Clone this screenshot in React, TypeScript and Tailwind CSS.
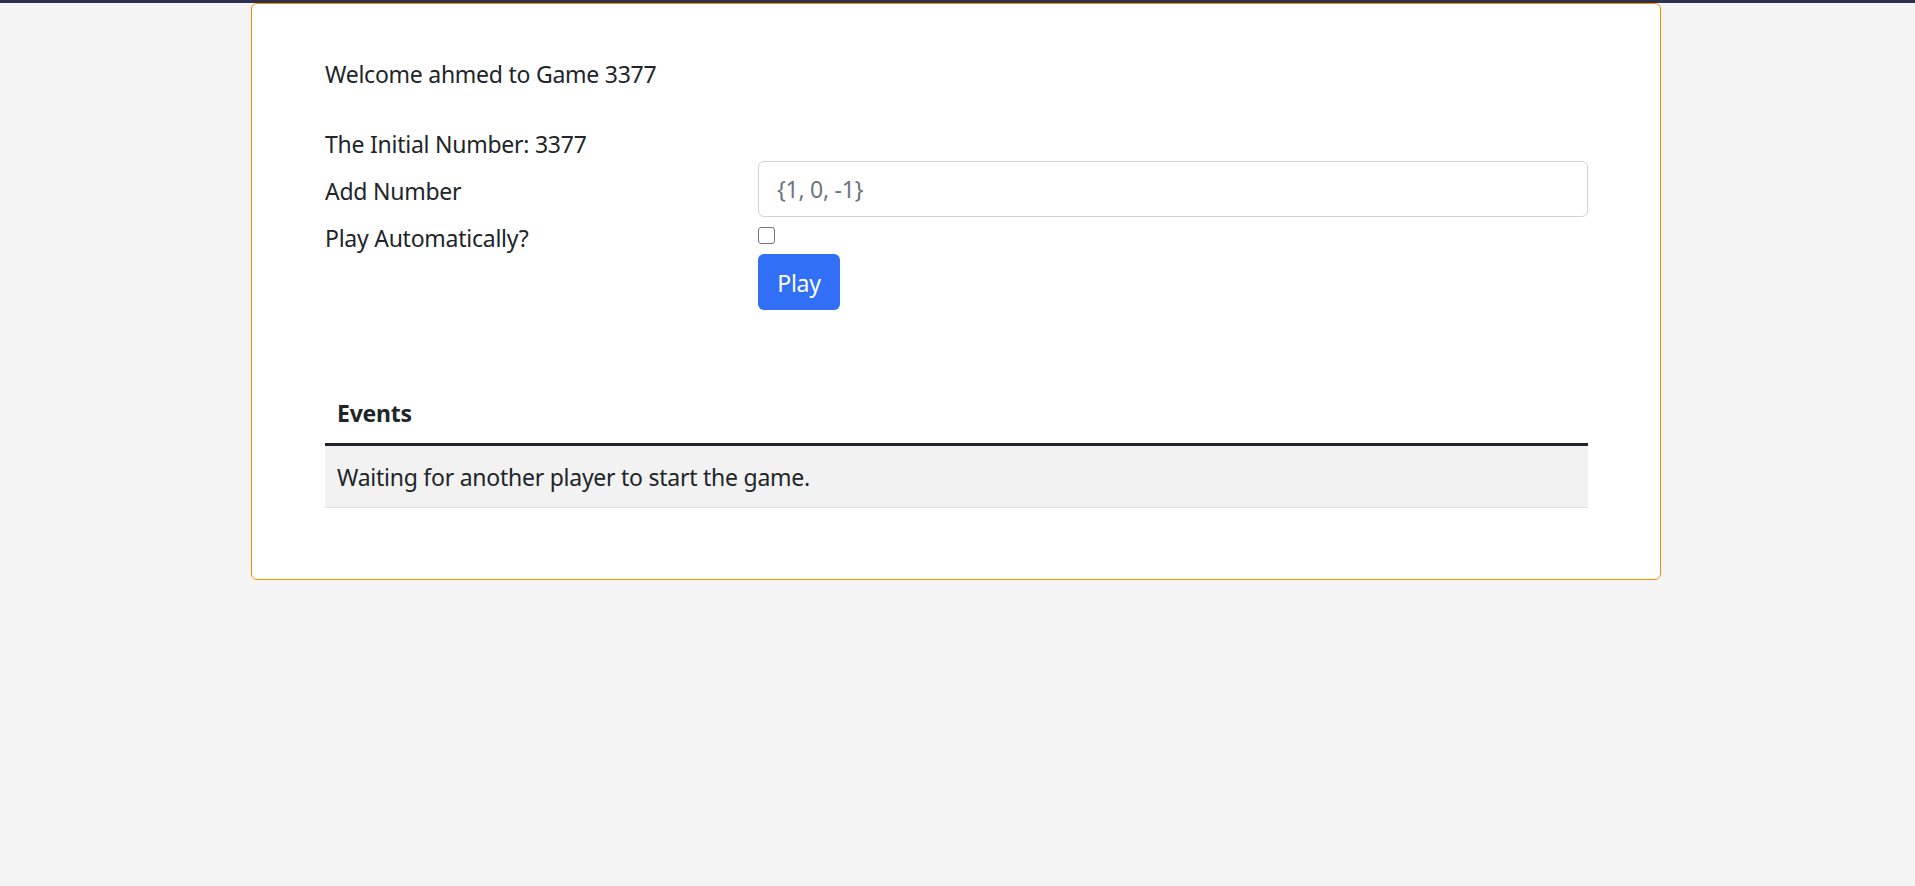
import { useState } from 'react';

const font = { fontFamily: '"Noto Sans", "Open Sans", Arial, sans-serif' };

export default function App() {
    const [auto, setAuto] = useState(false);
    const [value, setValue] = useState('');

    return (
        <div className="min-h-[886px] bg-[#f4f4f4] text-[#212529]" style={font}>
            <div className="h-[3px] bg-[#2c3250]" />

            <div className="ml-[251px] w-[1410px] rounded-[6px] border border-[#ff8c00] bg-white pb-[71px] pl-[73px] pr-[72px] pt-[51px] text-[23px] leading-[36px] tracking-[-0.25px]">
                <p className="pt-[1px]">Welcome ahmed to Game 3377</p>

                <p className="mt-[33px] pt-[1px]">The Initial Number: 3377</p>

                <div className="grid grid-cols-[433px_1fr]">
                    <label className="pt-[11px]">Add Number</label>
                    <input
                        value={value}
                        onChange={e => setValue(e.target.value)}
                        placeholder="{1, 0, -1}"
                        className="-mt-[1px] h-[56px] w-full rounded-[6px] border border-[#ced4da] px-[18px] text-[23px] tracking-[-0.25px] outline-none placeholder:text-[#6c757d]"
                    />

                    <label className="pt-[3px]">Play Automatically?</label>
                    <div className="flex flex-col items-start">
                        <input
                            type="checkbox"
                            checked={auto}
                            onChange={e => setAuto(e.target.checked)}
                            className="mt-[10px] h-[17px] w-[17px] appearance-none rounded-[3px] border border-[#767676] bg-white checked:bg-[#0075ff]"
                        />
                        <button
                            type="button"
                            className="mt-[10px] flex h-[56px] w-[82px] items-center justify-center rounded-[6px] bg-[#316ff6] pt-[1px] text-[23px] text-white"
                        >
                            Play
                        </button>
                    </div>
                </div>

                <table className="mt-[72px] w-full border-collapse text-left">
                    <thead>
                        <tr>
                            <th className="border-b-[3px] border-[#212529] px-[12px] pb-[12px] pt-[13px] font-bold">Events</th>
                        </tr>
                    </thead>
                    <tbody>
                        <tr className="bg-[#f2f2f2]">
                            <td className="border-b border-[#dee2e6] px-[12px] pb-[12px] pt-[13px]">
                                Waiting for another player to start the game.
                            </td>
                        </tr>
                    </tbody>
                </table>
            </div>
        </div>
    );
}
